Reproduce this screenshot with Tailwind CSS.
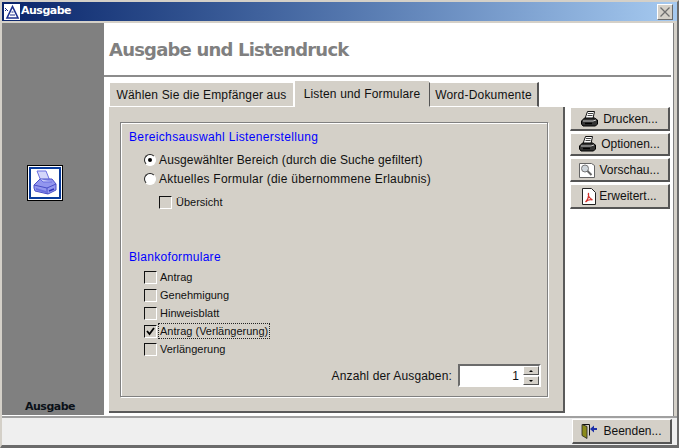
<!DOCTYPE html>
<html lang="de">
<head>
<meta charset="UTF-8">
<title>Ausgabe</title>
<script src="https://cdn.jsdelivr.net/npm/@tailwindcss/browser@4"></script>
</head>
<body class="m-0 overflow-hidden bg-[#f0f0f0] font-['Liberation_Sans',sans-serif] text-[12px] text-[#111]">
<div class="flex h-[448px] w-[679px] flex-col border-t-2 border-r-2 border-b-[3px] border-l-2 border-t-[#d4d0c8] border-r-[#6b6b6b] border-b-[#6b6b6b] border-l-[#d4d0c8]">

  <!-- title bar -->
  <div class="flex h-[19px] shrink-0 items-center bg-gradient-to-r from-[#0a246a] to-[#a6caf0] pr-[4px] pl-[2px]">
    <svg class="h-[16px] w-[16px] shrink-0" viewBox="0 0 16 16">
      <rect width="16" height="16" fill="#fff"/>
      <path d="M8.500 2.500 14 14H3Z" fill="none" stroke="#1c2f8c" stroke-width="1.600"/>
      <path d="M6 11h5M7.500 8h2" stroke="#1c2f8c" stroke-width="1"/>
      <path d="M1 4l3 3M1 7l2-2" stroke="#1c2f8c" stroke-width="1"/>
    </svg>
    <span class="ml-[1px] font-['DejaVu_Sans',sans-serif] text-[11px] font-bold tracking-[-0.5px] text-white">Ausgabe</span>
    <div class="ml-auto flex h-[16px] w-[16px] items-center justify-center border border-t-white border-r-[#6b6b6b] border-b-[#6b6b6b] border-l-white bg-[#d4d0c8]">
      <svg class="h-[10px] w-[10px]" viewBox="0 0 10 10"><path d="M.5.5 9.500 9.500M9.500.5.5 9.500" stroke="#6f6f6f" stroke-width="1.300" fill="none"/></svg>
    </div>
  </div>

  <!-- body -->
  <div class="flex h-[395px] shrink-0 border-t-2 border-r-[3px] border-t-[#d4d0c8] border-r-[#d4d0c8]">
    <!-- side panel -->
    <div class="flex w-[102px] shrink-0 flex-col border-b border-b-white bg-[#808080] pb-[2px]">
      <div class="mt-[142px] ml-[25px] flex h-[36px] w-[36px] items-center justify-center border border-black bg-white p-[1px]">
        <div class="flex h-full w-full items-center justify-center border-2 border-[#0a3c9c] bg-white">
          <svg class="h-[26px] w-[26px]" viewBox="0 0 26 26">
            <path d="M5 1h9l4 10H9Z" fill="#d4d6fa" stroke="#6a6fe0" stroke-width="1"/>
            <path d="M2 15l6-6h12l4 5v6l-8 4-13-3-1-3Z" fill="#9296ee" stroke="#4a4fc8" stroke-width="1"/>
            <path d="M8 9l3 3h9" fill="#c9ccf7" stroke="#6a6fe0" stroke-width="1"/>
            <path d="M2 15l13 3 9-4M15 18v6" fill="none" stroke="#4a4fc8" stroke-width="1"/>
            <path d="M4 18l10 3v2L4 20Z" fill="#6a6fe0"/>
            <path d="M17 21l5-2" stroke="#2e33b8" stroke-width="1.400"/>
          </svg>
        </div>
      </div>
      <span class="mt-auto ml-[23px] font-['DejaVu_Sans',sans-serif] text-[11px] leading-[13px] font-bold tracking-[-0.5px] text-[#0b1118]">Ausgabe</span>
    </div>

    <!-- main -->
    <div class="flex min-w-0 flex-1 flex-col border-r border-r-[#808080] bg-white">
      <div class="mr-[2px] flex h-[54px] shrink-0 items-center border-b-2 border-b-[#8c8c8c] pl-[5px]">
        <h1 class="font-['DejaVu_Sans',sans-serif] text-[18px] font-bold tracking-[-0.8px] text-[#808080]">Ausgabe und Listendruck</h1>
      </div>

      <div class="flex flex-1 pt-[4px] pl-[5px]">
        <div class="flex w-[456px] shrink-0 flex-col">
          <!-- tabs -->
          <div class="flex h-[26px] shrink-0 items-end">
            <div class="flex h-[25px] w-[185px] items-center justify-center border border-white bg-[#d4d0c8] pt-[1px] text-[12px] tracking-[0.16px]">Wählen Sie die Empfänger aus</div>
            <div class="flex h-[27px] w-[135px] items-center justify-center border-t border-l border-t-white border-l-white bg-[#d4d0c8] pb-[1px] text-[12px] tracking-[0.16px]">Listen und Formulare</div>
            <div class="flex h-[25px] w-[110px] items-center justify-center border-t border-r-2 border-b border-l border-t-white border-r-[#555] border-b-white border-l-[#555] bg-[#d4d0c8] pt-[1px] text-[12px] tracking-[0.2px]">Word-Dokumente</div>
          </div>
          <!-- tab page -->
          <div class="h-[306px] border-r-2 border-b-2 border-r-[#5a5a5a] border-b-[#5a5a5a] bg-[#d4d0c8] pt-[15px] pr-[15px] pl-[11px]">
            <div class="flex h-[275px] flex-col border border-[#808080] pl-[8px] shadow-[1px_1px_0_#fff,inset_1px_1px_0_#fff]">
              <p class="mt-[6px] h-[16px] text-[12px] leading-[16px] tracking-[0.35px] text-[#0000ff]">Bereichsauswahl Listenerstellung</p>
              <div class="mt-[5px] ml-[15px] flex h-[19px] items-center gap-[3px]">
                <span class="flex h-[12px] w-[12px] items-center justify-center rounded-full border border-t-[#222] border-r-white border-b-white border-l-[#222] bg-white"><span class="h-[4px] w-[4px] rounded-full bg-black"></span></span>
                <span class="tracking-[0.13px]">Ausgewählter Bereich (durch die Suche gefiltert)</span>
              </div>
              <div class="ml-[15px] flex h-[19px] items-center gap-[3px]">
                <span class="h-[12px] w-[12px] rounded-full border border-t-[#222] border-r-white border-b-white border-l-[#222] bg-white"></span>
                <span class="tracking-[0.23px]">Aktuelles Formular (die übernommene Erlaubnis)</span>
              </div>
              <div class="mt-[5px] ml-[30px] flex h-[18px] items-center gap-[4px]">
                <span class="h-[13px] w-[13px] border border-t-[#111] border-r-white border-b-white border-l-[#111]"></span>
                <span class="text-[11px]">Übersicht</span>
              </div>
              <p class="mt-[38px] h-[16px] text-[12px] leading-[16px] tracking-[0.3px] text-[#0000ff]">Blankoformulare</p>
              <div class="mt-[3px] ml-[15px] flex flex-col">
                <div class="flex h-[18px] items-center gap-[3px]"><span class="h-[13px] w-[13px] border border-t-[#111] border-r-white border-b-white border-l-[#111]"></span><span class="text-[11px]">Antrag</span></div>
                <div class="flex h-[18px] items-center gap-[3px]"><span class="h-[13px] w-[13px] border border-t-[#111] border-r-white border-b-white border-l-[#111]"></span><span class="text-[11px]">Genehmigung</span></div>
                <div class="flex h-[18px] items-center gap-[3px]"><span class="h-[13px] w-[13px] border border-t-[#111] border-r-white border-b-white border-l-[#111]"></span><span class="text-[11px]">Hinweisblatt</span></div>
                <div class="flex h-[18px] items-center gap-[1px]">
                  <span class="flex h-[13px] w-[13px] items-center justify-center border border-t-[#111] border-r-white border-b-white border-l-[#111]"><svg class="h-[9px] w-[9px]" viewBox="0 0 9 9"><path d="M1 4l2.500 3L8 1" fill="none" stroke="#000" stroke-width="1.800"/></svg></span>
                  <span class="border border-dotted border-[#222] px-[1px] text-[11px] leading-[14px]">Antrag (Verlängerung)</span>
                </div>
                <div class="flex h-[18px] items-center gap-[3px]"><span class="h-[13px] w-[13px] border border-t-[#111] border-r-white border-b-white border-l-[#111]"></span><span class="text-[11px]">Verlängerung</span></div>
              </div>
              <div class="mt-[6px] mr-[6px] flex items-center justify-end gap-[6px]">
                <span class="tracking-[0.15px]">Anzahl der Ausgaben:</span>
                <div class="flex h-[23px] w-[83px] items-center border-2 border-t-[#6b6b6b] border-r-white border-b-white border-l-[#6b6b6b] bg-white pl-[2px]">
                  <span class="flex-1 text-right text-[12px]">1</span>
                  <div class="ml-[4px] flex flex-col gap-[1px]">
                    <span class="flex h-[9px] w-[16px] items-center justify-center border border-t-white border-r-[#555] border-b-[#555] border-l-white bg-[#d4d0c8]"><svg class="h-[2px] w-[4px]" viewBox="0 0 4 2"><path d="M2 0 4 2H0Z" fill="#000"/></svg></span>
                    <span class="flex h-[9px] w-[16px] items-center justify-center border border-t-white border-r-[#555] border-b-[#555] border-l-white bg-[#d4d0c8]"><svg class="h-[2px] w-[4px]" viewBox="0 0 4 2"><path d="M0 0H4L2 2Z" fill="#000"/></svg></span>
                  </div>
                </div>
              </div>
            </div>
          </div>
        </div>

        <!-- action buttons -->
        <div class="mt-[26px] ml-[5px] flex w-[100px] flex-col gap-[2px]">
          <div class="flex h-[24px] items-center justify-center gap-[5px] border border-r-2 border-b-2 border-t-white border-r-[#555] border-b-[#555] border-l-white bg-[#d4d0c8]">
            <svg class="h-[16px] w-[17px]" viewBox="0 0 17 16"><path d="M6.500.5h7l-1.500 7H4Z" fill="#fff" stroke="#111"/><path d="M7 2.500h5M6.500 4.500h5" stroke="#444"/><path d="M.5 10l3-3h10l3 2v4l-2 2H2l-1.500-2Z" fill="#333" stroke="#000"/><path d="M2 10h10l3-1" fill="none" stroke="#ccc"/><path d="M4 12.500h7" stroke="#000" stroke-width="1.500"/></svg>
            <span>Drucken...</span>
          </div>
          <div class="flex h-[23px] items-center justify-center gap-[5px] border border-r-2 border-b-2 border-t-white border-r-[#555] border-b-[#555] border-l-white bg-[#d4d0c8]">
            <svg class="h-[16px] w-[17px]" viewBox="0 0 17 16"><path d="M6.500.5h7l-1.500 7H4Z" fill="#fff" stroke="#111"/><path d="M7 2.500h5M6.500 4.500h5" stroke="#444"/><path d="M.5 10l3-3h10l3 2v4l-2 2H2l-1.500-2Z" fill="#333" stroke="#000"/><path d="M2 10h10l3-1" fill="none" stroke="#ccc"/><path d="M4 12.500h7" stroke="#000" stroke-width="1.500"/></svg>
            <span>Optionen...</span>
          </div>
          <div class="flex h-[24px] items-center justify-center gap-[4px] border border-r-2 border-b-2 border-t-white border-r-[#555] border-b-[#555] border-l-white bg-[#d4d0c8]">
            <svg class="h-[16px] w-[16px]" viewBox="0 0 16 16"><path d="M.5 1.500h12l3 2v12H.5Z" fill="#fff" stroke="#666"/><circle cx="6" cy="6.500" r="3.500" fill="#cfd6dc" stroke="#777"/><path d="M8.500 9l4 4" stroke="#666" stroke-width="2"/></svg>
            <span>Vorschau...</span>
          </div>
          <div class="flex h-[25px] items-center justify-center gap-[3px] border border-r-2 border-b-2 border-t-white border-r-[#555] border-b-[#555] border-l-white bg-[#d4d0c8]">
            <svg class="h-[17px] w-[14px]" viewBox="0 0 14 17"><path d="M.5 .5h9l4 4v12H.5Z" fill="#fff" stroke="#222"/><path d="M6.500 5c-1 3 1 5 4 7-3-1-5 0-7 2 2-2 3.500-5 3-9Z" fill="none" stroke="#d2302a" stroke-width="1.200"/></svg>
            <span>Erweitert...</span>
          </div>
        </div>
      </div>
    </div>
  </div>

  <!-- footer -->
  <div class="flex flex-1 justify-end border-t-2 border-t-[#a0a0a0] bg-[#efefef] pt-[1px] pr-[5px]">
    <div class="flex h-[25px] w-[100px] items-center justify-center gap-[5px] border border-r-2 border-b-2 border-t-white border-r-[#555] border-b-[#555] border-l-white bg-[#d4d0c8]">
      <svg class="h-[16px] w-[17px]" viewBox="0 0 17 16"><path d="M1.500 1.500h7v11" fill="none" stroke="#111"/><path d="M1 1.500l5 2v12l-5-3Z" fill="#8b8b1a" stroke="#222" stroke-width=".8"/><path d="M16 5h-3V2.500L9 6l4 3.500V7h3Z" fill="#1b2fa8"/></svg>
      <span>Beenden...</span>
    </div>
  </div>
</div>
</body>
</html>
